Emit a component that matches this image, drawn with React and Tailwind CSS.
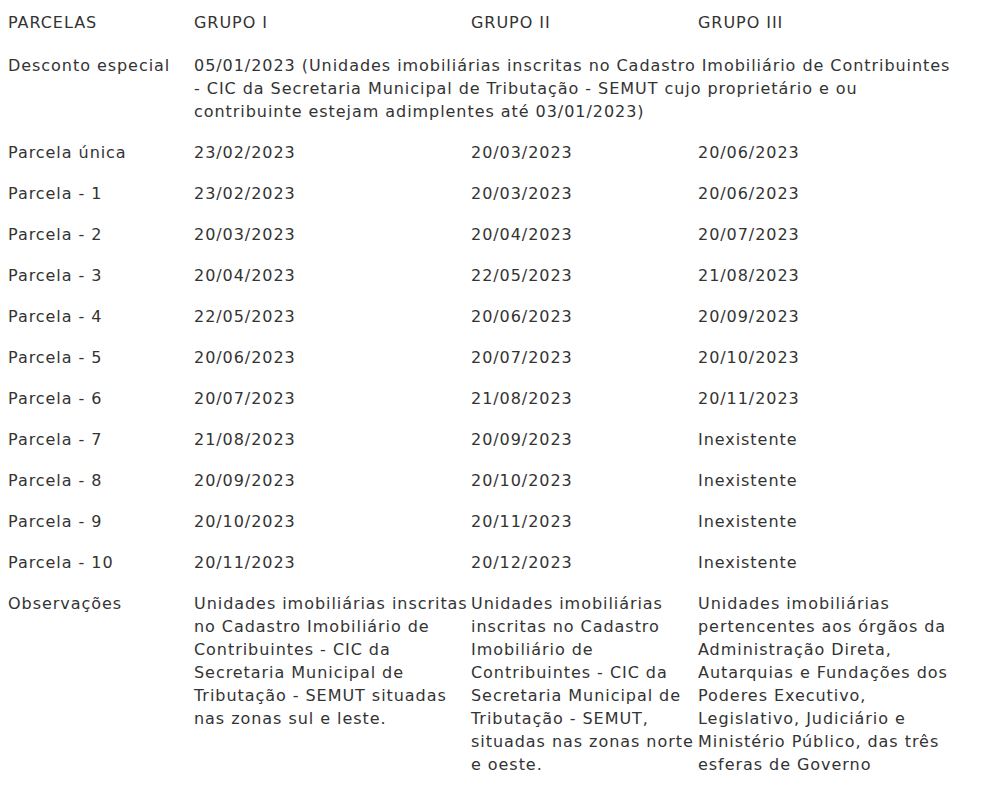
import React from "react";

const rows = [
  ["Parcela única", "23/02/2023", "20/03/2023", "20/06/2023"],
  ["Parcela - 1", "23/02/2023", "20/03/2023", "20/06/2023"],
  ["Parcela - 2", "20/03/2023", "20/04/2023", "20/07/2023"],
  ["Parcela - 3", "20/04/2023", "22/05/2023", "21/08/2023"],
  ["Parcela - 4", "22/05/2023", "20/06/2023", "20/09/2023"],
  ["Parcela - 5", "20/06/2023", "20/07/2023", "20/10/2023"],
  ["Parcela - 6", "20/07/2023", "21/08/2023", "20/11/2023"],
  ["Parcela - 7", "21/08/2023", "20/09/2023", "Inexistente"],
  ["Parcela - 8", "20/09/2023", "20/10/2023", "Inexistente"],
  ["Parcela - 9", "20/10/2023", "20/11/2023", "Inexistente"],
  ["Parcela - 10", "20/11/2023", "20/12/2023", "Inexistente"],
];

const obs = [
  [
    "Unidades imobiliárias inscritas",
    "no Cadastro Imobiliário de",
    "Contribuintes - CIC da",
    "Secretaria Municipal de",
    "Tributação - SEMUT situadas",
    "nas zonas sul e leste.",
  ],
  [
    "Unidades imobiliárias",
    "inscritas no Cadastro",
    "Imobiliário de",
    "Contribuintes - CIC da",
    "Secretaria Municipal de",
    "Tributação - SEMUT,",
    "situadas nas zonas norte",
    "e oeste.",
  ],
  [
    "Unidades imobiliárias",
    "pertencentes aos órgãos da",
    "Administração Direta,",
    "Autarquias e Fundações dos",
    "Poderes Executivo,",
    "Legislativo, Judiciário e",
    "Ministério Público, das três",
    "esferas de Governo",
  ],
];

const desconto = [
  "05/01/2023 (Unidades imobiliárias inscritas no Cadastro Imobiliário de Contribuintes",
  "- CIC da Secretaria Municipal de Tributação - SEMUT cujo proprietário e ou",
  "contribuinte estejam adimplentes até 03/01/2023)",
];

function Lines({ lines }) {
  return (
    <div className="flex flex-col">
      {lines.map((l, i) => (
        <span key={i} className="whitespace-nowrap">
          {l}
        </span>
      ))}
    </div>
  );
}

export default function App() {
  return (
    <div
      className="w-[984px] h-[801px] bg-white text-[#333333] text-[16px] leading-[23px] tracking-[0.95px] pl-[8px] pt-[2px] overflow-hidden"
      style={{ fontFamily: '"DejaVu Sans", Verdana, sans-serif' }}
    >
      <div className="grid grid-cols-[186px_277px_227px_262px]">
        {["PARCELAS", "GRUPO I", "GRUPO II", "GRUPO III"].map((h) => (
          <div key={h} className="pt-[9px] pb-[11px] whitespace-nowrap">
            {h}
          </div>
        ))}

        <div className="py-[9px] whitespace-nowrap">Desconto especial</div>
        <div className="col-span-3 py-[9px]">
          <Lines lines={desconto} />
        </div>

        {rows.map((r) =>
          r.map((c, i) => (
            <div key={r[0] + i} className="py-[9px] whitespace-nowrap">
              {c}
            </div>
          ))
        )}

        <div className="py-[9px] whitespace-nowrap">Observações</div>
        {obs.map((o, i) => (
          <div key={i} className="py-[9px]">
            <Lines lines={o} />
          </div>
        ))}
      </div>
    </div>
  );
}
